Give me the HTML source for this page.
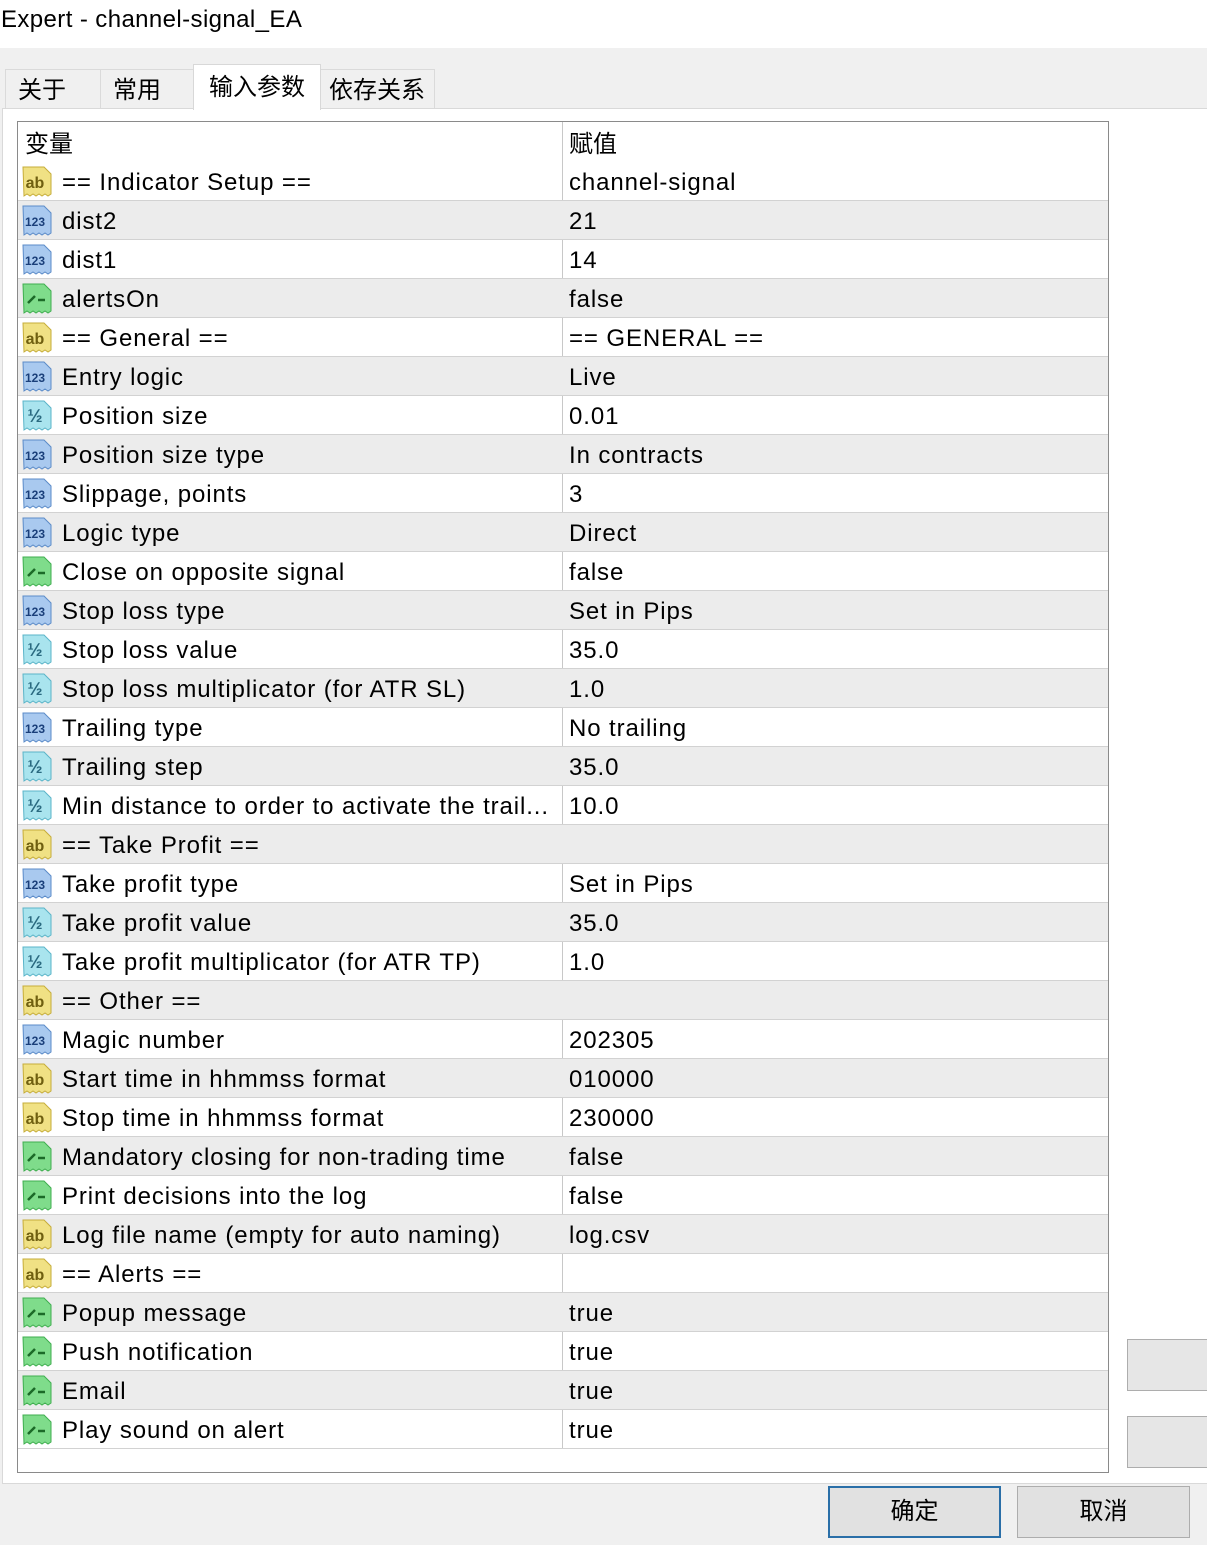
<!DOCTYPE html>
<html><head><meta charset="utf-8">
<style>
*{margin:0;padding:0;box-sizing:border-box}
body{width:1207px;height:1545px;position:relative;overflow:hidden;background:#f0f0f0;font-family:"Liberation Sans","Noto Sans CJK SC",sans-serif;color:#000}
.title{position:absolute;left:0;top:0;width:1207px;height:48px;background:#fff;font-size:24px;line-height:40px;padding-left:1px;letter-spacing:0.4px}
.tab{position:absolute;top:69px;height:40px;background:#f0f0f0;border:1px solid #dadada;border-bottom:none;font-size:24px;line-height:42px;padding-left:12px}
.tab.sel{top:64px;height:46px;background:#fff;border-color:#d8d8d8;line-height:46px;padding-left:15px;z-index:3}
.panel{position:absolute;left:2px;top:108px;width:1210px;height:1376px;background:#fff;border:1px solid #d9d9d9}
.table{position:absolute;left:17px;top:121px;width:1092px;height:1352px;border:1px solid #8a8a8a;background:#fff}
.hdr{position:absolute;left:0;top:0;width:100%;height:40px;font-size:24px;line-height:46px}
.row{position:absolute;left:0;width:1090px;height:39px;border-bottom:1px solid #d2d2d2;font-size:24px;line-height:41px;letter-spacing:0.9px}
.row.g{background:#ececec}
.c1{position:absolute;left:44px;top:0;white-space:nowrap}
.c2{position:absolute;left:551px;top:0;white-space:nowrap}
.ic{position:absolute;left:3px;top:4px;width:32px;height:32px}
.vline{position:absolute;left:544px;top:0;width:1px;height:1327px;background:#c8c8c8}
.btn{position:absolute;background:#e1e1e1;border:1px solid #adadad;font-size:24px;text-align:center}
</style></head><body>
<div class="title">Expert - channel-signal_EA</div>
<div class="tab" style="left:5px;width:96px">关于</div>
<div class="tab" style="left:100px;width:94px">常用</div>
<div class="tab sel" style="left:193px;width:128px">输入参数</div>
<div class="tab" style="left:320px;width:115px;padding-left:8px">依存关系</div>
<div class="panel"></div>
<div class="table">
<div class="hdr"><span style="position:absolute;left:7px">变量</span><span style="position:absolute;left:551px">赋值</span></div>
<div class="vline"></div>

<div class="row" style="top:40px"><svg class="ic" viewBox="0 0 32 32"><path d="M2 1H23L30 8V28l-3 2-3-2-3 2-3-2-3 2-3-2-3 2-3-2-3 2Z" fill="#f0e184" stroke="#c6ad3a"/><text x="14" y="22" font-size="16" font-family="Liberation Sans" font-weight="bold" text-anchor="middle" fill="#6f5f10" letter-spacing="0">ab</text></svg><span class="c1">== Indicator Setup ==</span><span class="c2">channel-signal</span></div>
<div class="row g" style="top:79px"><svg class="ic" viewBox="0 0 32 32"><path d="M2 1H23L30 8V28l-3 2-3-2-3 2-3-2-3 2-3-2-3 2-3-2-3 2Z" fill="#a9c9ef" stroke="#5b8bc8"/><text x="14" y="21" font-size="12" font-family="Liberation Sans" font-weight="bold" text-anchor="middle" fill="#1a3f7a" letter-spacing="0">123</text></svg><span class="c1">dist2</span><span class="c2">21</span></div>
<div class="row" style="top:118px"><svg class="ic" viewBox="0 0 32 32"><path d="M2 1H23L30 8V28l-3 2-3-2-3 2-3-2-3 2-3-2-3 2-3-2-3 2Z" fill="#a9c9ef" stroke="#5b8bc8"/><text x="14" y="21" font-size="12" font-family="Liberation Sans" font-weight="bold" text-anchor="middle" fill="#1a3f7a" letter-spacing="0">123</text></svg><span class="c1">dist1</span><span class="c2">14</span></div>
<div class="row g" style="top:157px"><svg class="ic" viewBox="0 0 32 32"><path d="M2 1H23L30 8V28l-3 2-3-2-3 2-3-2-3 2-3-2-3 2-3-2-3 2Z" fill="#7fdc8b" stroke="#3fae4f"/><path d="M7 20L14 13M17 17H24" stroke="#1c6a28" stroke-width="2.5" fill="none"/></svg><span class="c1">alertsOn</span><span class="c2">false</span></div>
<div class="row" style="top:196px"><svg class="ic" viewBox="0 0 32 32"><path d="M2 1H23L30 8V28l-3 2-3-2-3 2-3-2-3 2-3-2-3 2-3-2-3 2Z" fill="#f0e184" stroke="#c6ad3a"/><text x="14" y="22" font-size="16" font-family="Liberation Sans" font-weight="bold" text-anchor="middle" fill="#6f5f10" letter-spacing="0">ab</text></svg><span class="c1">== General ==</span><span class="c2">== GENERAL ==</span></div>
<div class="row g" style="top:235px"><svg class="ic" viewBox="0 0 32 32"><path d="M2 1H23L30 8V28l-3 2-3-2-3 2-3-2-3 2-3-2-3 2-3-2-3 2Z" fill="#a9c9ef" stroke="#5b8bc8"/><text x="14" y="21" font-size="12" font-family="Liberation Sans" font-weight="bold" text-anchor="middle" fill="#1a3f7a" letter-spacing="0">123</text></svg><span class="c1">Entry logic</span><span class="c2">Live</span></div>
<div class="row" style="top:274px"><svg class="ic" viewBox="0 0 32 32"><path d="M2 1H23L30 8V28l-3 2-3-2-3 2-3-2-3 2-3-2-3 2-3-2-3 2Z" fill="#a9e4ee" stroke="#5ab4c8"/><text x="14" y="22" font-size="18" font-family="Liberation Sans" font-weight="bold" text-anchor="middle" fill="#2a6a80" letter-spacing="0">½</text></svg><span class="c1">Position size</span><span class="c2">0.01</span></div>
<div class="row g" style="top:313px"><svg class="ic" viewBox="0 0 32 32"><path d="M2 1H23L30 8V28l-3 2-3-2-3 2-3-2-3 2-3-2-3 2-3-2-3 2Z" fill="#a9c9ef" stroke="#5b8bc8"/><text x="14" y="21" font-size="12" font-family="Liberation Sans" font-weight="bold" text-anchor="middle" fill="#1a3f7a" letter-spacing="0">123</text></svg><span class="c1">Position size type</span><span class="c2">In contracts</span></div>
<div class="row" style="top:352px"><svg class="ic" viewBox="0 0 32 32"><path d="M2 1H23L30 8V28l-3 2-3-2-3 2-3-2-3 2-3-2-3 2-3-2-3 2Z" fill="#a9c9ef" stroke="#5b8bc8"/><text x="14" y="21" font-size="12" font-family="Liberation Sans" font-weight="bold" text-anchor="middle" fill="#1a3f7a" letter-spacing="0">123</text></svg><span class="c1">Slippage, points</span><span class="c2">3</span></div>
<div class="row g" style="top:391px"><svg class="ic" viewBox="0 0 32 32"><path d="M2 1H23L30 8V28l-3 2-3-2-3 2-3-2-3 2-3-2-3 2-3-2-3 2Z" fill="#a9c9ef" stroke="#5b8bc8"/><text x="14" y="21" font-size="12" font-family="Liberation Sans" font-weight="bold" text-anchor="middle" fill="#1a3f7a" letter-spacing="0">123</text></svg><span class="c1">Logic type</span><span class="c2">Direct</span></div>
<div class="row" style="top:430px"><svg class="ic" viewBox="0 0 32 32"><path d="M2 1H23L30 8V28l-3 2-3-2-3 2-3-2-3 2-3-2-3 2-3-2-3 2Z" fill="#7fdc8b" stroke="#3fae4f"/><path d="M7 20L14 13M17 17H24" stroke="#1c6a28" stroke-width="2.5" fill="none"/></svg><span class="c1">Close on opposite signal</span><span class="c2">false</span></div>
<div class="row g" style="top:469px"><svg class="ic" viewBox="0 0 32 32"><path d="M2 1H23L30 8V28l-3 2-3-2-3 2-3-2-3 2-3-2-3 2-3-2-3 2Z" fill="#a9c9ef" stroke="#5b8bc8"/><text x="14" y="21" font-size="12" font-family="Liberation Sans" font-weight="bold" text-anchor="middle" fill="#1a3f7a" letter-spacing="0">123</text></svg><span class="c1">Stop loss type</span><span class="c2">Set in Pips</span></div>
<div class="row" style="top:508px"><svg class="ic" viewBox="0 0 32 32"><path d="M2 1H23L30 8V28l-3 2-3-2-3 2-3-2-3 2-3-2-3 2-3-2-3 2Z" fill="#a9e4ee" stroke="#5ab4c8"/><text x="14" y="22" font-size="18" font-family="Liberation Sans" font-weight="bold" text-anchor="middle" fill="#2a6a80" letter-spacing="0">½</text></svg><span class="c1">Stop loss value</span><span class="c2">35.0</span></div>
<div class="row g" style="top:547px"><svg class="ic" viewBox="0 0 32 32"><path d="M2 1H23L30 8V28l-3 2-3-2-3 2-3-2-3 2-3-2-3 2-3-2-3 2Z" fill="#a9e4ee" stroke="#5ab4c8"/><text x="14" y="22" font-size="18" font-family="Liberation Sans" font-weight="bold" text-anchor="middle" fill="#2a6a80" letter-spacing="0">½</text></svg><span class="c1">Stop loss multiplicator (for ATR SL)</span><span class="c2">1.0</span></div>
<div class="row" style="top:586px"><svg class="ic" viewBox="0 0 32 32"><path d="M2 1H23L30 8V28l-3 2-3-2-3 2-3-2-3 2-3-2-3 2-3-2-3 2Z" fill="#a9c9ef" stroke="#5b8bc8"/><text x="14" y="21" font-size="12" font-family="Liberation Sans" font-weight="bold" text-anchor="middle" fill="#1a3f7a" letter-spacing="0">123</text></svg><span class="c1">Trailing type</span><span class="c2">No trailing</span></div>
<div class="row g" style="top:625px"><svg class="ic" viewBox="0 0 32 32"><path d="M2 1H23L30 8V28l-3 2-3-2-3 2-3-2-3 2-3-2-3 2-3-2-3 2Z" fill="#a9e4ee" stroke="#5ab4c8"/><text x="14" y="22" font-size="18" font-family="Liberation Sans" font-weight="bold" text-anchor="middle" fill="#2a6a80" letter-spacing="0">½</text></svg><span class="c1">Trailing step</span><span class="c2">35.0</span></div>
<div class="row" style="top:664px"><svg class="ic" viewBox="0 0 32 32"><path d="M2 1H23L30 8V28l-3 2-3-2-3 2-3-2-3 2-3-2-3 2-3-2-3 2Z" fill="#a9e4ee" stroke="#5ab4c8"/><text x="14" y="22" font-size="18" font-family="Liberation Sans" font-weight="bold" text-anchor="middle" fill="#2a6a80" letter-spacing="0">½</text></svg><span class="c1">Min distance to order to activate the trail...</span><span class="c2">10.0</span></div>
<div class="row g" style="top:703px"><svg class="ic" viewBox="0 0 32 32"><path d="M2 1H23L30 8V28l-3 2-3-2-3 2-3-2-3 2-3-2-3 2-3-2-3 2Z" fill="#f0e184" stroke="#c6ad3a"/><text x="14" y="22" font-size="16" font-family="Liberation Sans" font-weight="bold" text-anchor="middle" fill="#6f5f10" letter-spacing="0">ab</text></svg><span class="c1">== Take Profit ==</span><span class="c2"></span></div>
<div class="row" style="top:742px"><svg class="ic" viewBox="0 0 32 32"><path d="M2 1H23L30 8V28l-3 2-3-2-3 2-3-2-3 2-3-2-3 2-3-2-3 2Z" fill="#a9c9ef" stroke="#5b8bc8"/><text x="14" y="21" font-size="12" font-family="Liberation Sans" font-weight="bold" text-anchor="middle" fill="#1a3f7a" letter-spacing="0">123</text></svg><span class="c1">Take profit type</span><span class="c2">Set in Pips</span></div>
<div class="row g" style="top:781px"><svg class="ic" viewBox="0 0 32 32"><path d="M2 1H23L30 8V28l-3 2-3-2-3 2-3-2-3 2-3-2-3 2-3-2-3 2Z" fill="#a9e4ee" stroke="#5ab4c8"/><text x="14" y="22" font-size="18" font-family="Liberation Sans" font-weight="bold" text-anchor="middle" fill="#2a6a80" letter-spacing="0">½</text></svg><span class="c1">Take profit value</span><span class="c2">35.0</span></div>
<div class="row" style="top:820px"><svg class="ic" viewBox="0 0 32 32"><path d="M2 1H23L30 8V28l-3 2-3-2-3 2-3-2-3 2-3-2-3 2-3-2-3 2Z" fill="#a9e4ee" stroke="#5ab4c8"/><text x="14" y="22" font-size="18" font-family="Liberation Sans" font-weight="bold" text-anchor="middle" fill="#2a6a80" letter-spacing="0">½</text></svg><span class="c1">Take profit multiplicator (for ATR TP)</span><span class="c2">1.0</span></div>
<div class="row g" style="top:859px"><svg class="ic" viewBox="0 0 32 32"><path d="M2 1H23L30 8V28l-3 2-3-2-3 2-3-2-3 2-3-2-3 2-3-2-3 2Z" fill="#f0e184" stroke="#c6ad3a"/><text x="14" y="22" font-size="16" font-family="Liberation Sans" font-weight="bold" text-anchor="middle" fill="#6f5f10" letter-spacing="0">ab</text></svg><span class="c1">== Other ==</span><span class="c2"></span></div>
<div class="row" style="top:898px"><svg class="ic" viewBox="0 0 32 32"><path d="M2 1H23L30 8V28l-3 2-3-2-3 2-3-2-3 2-3-2-3 2-3-2-3 2Z" fill="#a9c9ef" stroke="#5b8bc8"/><text x="14" y="21" font-size="12" font-family="Liberation Sans" font-weight="bold" text-anchor="middle" fill="#1a3f7a" letter-spacing="0">123</text></svg><span class="c1">Magic number</span><span class="c2">202305</span></div>
<div class="row g" style="top:937px"><svg class="ic" viewBox="0 0 32 32"><path d="M2 1H23L30 8V28l-3 2-3-2-3 2-3-2-3 2-3-2-3 2-3-2-3 2Z" fill="#f0e184" stroke="#c6ad3a"/><text x="14" y="22" font-size="16" font-family="Liberation Sans" font-weight="bold" text-anchor="middle" fill="#6f5f10" letter-spacing="0">ab</text></svg><span class="c1">Start time in hhmmss format</span><span class="c2">010000</span></div>
<div class="row" style="top:976px"><svg class="ic" viewBox="0 0 32 32"><path d="M2 1H23L30 8V28l-3 2-3-2-3 2-3-2-3 2-3-2-3 2-3-2-3 2Z" fill="#f0e184" stroke="#c6ad3a"/><text x="14" y="22" font-size="16" font-family="Liberation Sans" font-weight="bold" text-anchor="middle" fill="#6f5f10" letter-spacing="0">ab</text></svg><span class="c1">Stop time in hhmmss format</span><span class="c2">230000</span></div>
<div class="row g" style="top:1015px"><svg class="ic" viewBox="0 0 32 32"><path d="M2 1H23L30 8V28l-3 2-3-2-3 2-3-2-3 2-3-2-3 2-3-2-3 2Z" fill="#7fdc8b" stroke="#3fae4f"/><path d="M7 20L14 13M17 17H24" stroke="#1c6a28" stroke-width="2.5" fill="none"/></svg><span class="c1">Mandatory closing for non-trading time</span><span class="c2">false</span></div>
<div class="row" style="top:1054px"><svg class="ic" viewBox="0 0 32 32"><path d="M2 1H23L30 8V28l-3 2-3-2-3 2-3-2-3 2-3-2-3 2-3-2-3 2Z" fill="#7fdc8b" stroke="#3fae4f"/><path d="M7 20L14 13M17 17H24" stroke="#1c6a28" stroke-width="2.5" fill="none"/></svg><span class="c1">Print decisions into the log</span><span class="c2">false</span></div>
<div class="row g" style="top:1093px"><svg class="ic" viewBox="0 0 32 32"><path d="M2 1H23L30 8V28l-3 2-3-2-3 2-3-2-3 2-3-2-3 2-3-2-3 2Z" fill="#f0e184" stroke="#c6ad3a"/><text x="14" y="22" font-size="16" font-family="Liberation Sans" font-weight="bold" text-anchor="middle" fill="#6f5f10" letter-spacing="0">ab</text></svg><span class="c1">Log file name (empty for auto naming)</span><span class="c2">log.csv</span></div>
<div class="row" style="top:1132px"><svg class="ic" viewBox="0 0 32 32"><path d="M2 1H23L30 8V28l-3 2-3-2-3 2-3-2-3 2-3-2-3 2-3-2-3 2Z" fill="#f0e184" stroke="#c6ad3a"/><text x="14" y="22" font-size="16" font-family="Liberation Sans" font-weight="bold" text-anchor="middle" fill="#6f5f10" letter-spacing="0">ab</text></svg><span class="c1">== Alerts ==</span><span class="c2"></span></div>
<div class="row g" style="top:1171px"><svg class="ic" viewBox="0 0 32 32"><path d="M2 1H23L30 8V28l-3 2-3-2-3 2-3-2-3 2-3-2-3 2-3-2-3 2Z" fill="#7fdc8b" stroke="#3fae4f"/><path d="M7 20L14 13M17 17H24" stroke="#1c6a28" stroke-width="2.5" fill="none"/></svg><span class="c1">Popup message</span><span class="c2">true</span></div>
<div class="row" style="top:1210px"><svg class="ic" viewBox="0 0 32 32"><path d="M2 1H23L30 8V28l-3 2-3-2-3 2-3-2-3 2-3-2-3 2-3-2-3 2Z" fill="#7fdc8b" stroke="#3fae4f"/><path d="M7 20L14 13M17 17H24" stroke="#1c6a28" stroke-width="2.5" fill="none"/></svg><span class="c1">Push notification</span><span class="c2">true</span></div>
<div class="row g" style="top:1249px"><svg class="ic" viewBox="0 0 32 32"><path d="M2 1H23L30 8V28l-3 2-3-2-3 2-3-2-3 2-3-2-3 2-3-2-3 2Z" fill="#7fdc8b" stroke="#3fae4f"/><path d="M7 20L14 13M17 17H24" stroke="#1c6a28" stroke-width="2.5" fill="none"/></svg><span class="c1">Email</span><span class="c2">true</span></div>
<div class="row" style="top:1288px"><svg class="ic" viewBox="0 0 32 32"><path d="M2 1H23L30 8V28l-3 2-3-2-3 2-3-2-3 2-3-2-3 2-3-2-3 2Z" fill="#7fdc8b" stroke="#3fae4f"/><path d="M7 20L14 13M17 17H24" stroke="#1c6a28" stroke-width="2.5" fill="none"/></svg><span class="c1">Play sound on alert</span><span class="c2">true</span></div>
</div>
<div class="btn" style="left:1127px;top:1339px;width:90px;height:52px;background:#e6e6e6"></div>
<div class="btn" style="left:1127px;top:1416px;width:90px;height:52px;background:#e6e6e6"></div>
<div class="btn" style="left:828px;top:1486px;width:173px;height:52px;border:2px solid #2a6fa8;line-height:48px">确定</div>
<div class="btn" style="left:1017px;top:1486px;width:173px;height:52px;line-height:50px">取消</div>
</body></html>
